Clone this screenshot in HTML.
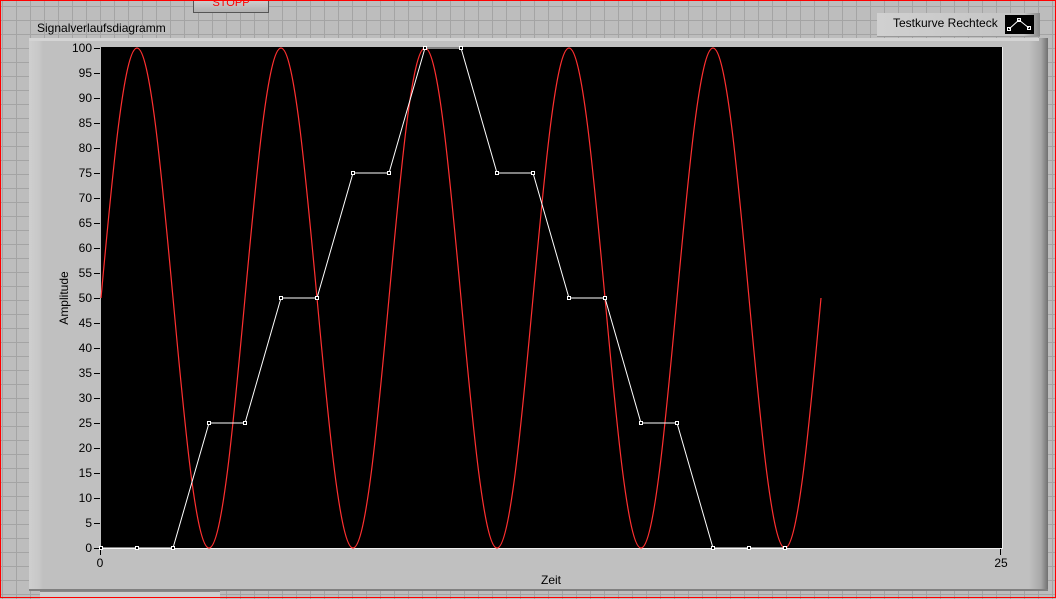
<!DOCTYPE html>
<html><head><meta charset="utf-8"><style>
html,body{margin:0;padding:0}
body{width:1056px;height:598px;overflow:hidden;position:relative;font-family:"Liberation Sans",sans-serif;
background-color:#bdbdbd;
background-image:linear-gradient(#a4a4a4 1px,transparent 1px),linear-gradient(90deg,#a4a4a4 1px,transparent 1px);
background-size:14px 14px;background-position:2px 6px}
.frame{position:absolute;left:0;top:0;width:1054px;height:596px;border:1px solid #ff0000;pointer-events:none}
.t{position:absolute;font-size:12px;color:#000;white-space:nowrap}
</style></head><body>
<div style="position:absolute;left:193px;top:-4px;width:74px;height:15px;background:linear-gradient(#d8d8d8,#b0b0b0);border:1px solid #555;color:#f00;font-size:11px;text-align:center;line-height:12px">STOPP</div>
<div class="t" style="left:37px;top:21px">Signalverlaufsdiagramm</div>
<!-- legend -->
<div style="position:absolute;left:877px;top:13px;width:163px;height:23px;background:linear-gradient(90deg,#d0d0d0,#c4c4c4 90%,#888);border-bottom:1px solid #999"></div>
<div class="t" style="left:893px;top:16px">Testkurve Rechteck</div>
<svg style="position:absolute;left:1005px;top:15px" width="29" height="19"><rect width="29" height="19" fill="#000"/><polyline points="4,14 14,5 24,13" fill="none" stroke="#fff"/><rect x="2.5" y="12.5" width="3" height="3" fill="none" stroke="#fff"/><rect x="12.5" y="3.5" width="3" height="3" fill="none" stroke="#fff"/><rect x="22.5" y="11.5" width="3" height="3" fill="none" stroke="#fff"/></svg>
<!-- panel -->
<div style="position:absolute;left:29px;top:38px;width:1019px;height:551px;background:linear-gradient(90deg,#cfcfcf 0,#c8c8c8 10px,#c0c0c0 14px,#c0c0c0 1000px,#a8a8a8 1012px,#707070 1019px);border-bottom:2px solid #808080"></div>
<div style="position:absolute;left:29px;top:38px;width:1010px;height:3px;background:#d4d4d4"></div>
<div style="position:absolute;left:40px;top:591px;width:180px;height:7px;background:#d0d0d0;border-top:1px solid #888"></div>
<svg style="position:absolute;left:0;top:0" width="1056" height="598">
<rect x="101" y="47" width="901" height="501" fill="#000"/>
<line x1="101" y1="548.5" x2="1002" y2="548.5" stroke="#eee"/>
<line x1="1002.5" y1="47" x2="1002.5" y2="549" stroke="#eee"/>
<g stroke="#000">
<path d="M94 48.5h6M94 73.5h6M94 98.5h6M94 123.5h6M94 148.5h6M94 173.5h6M94 198.5h6M94 223.5h6M94 248.5h6M94 273.5h6M94 298.5h6M94 323.5h6M94 348.5h6M94 373.5h6M94 398.5h6M94 423.5h6M94 448.5h6M94 473.5h6M94 498.5h6M94 523.5h6M94 548.5h6"/>
<path d="M100.5 549v6M1000.5 549v6"/>
</g>
<g font-size="12" text-anchor="end" fill="#000" font-family="Liberation Sans">
<text x="92" y="52">100</text><text x="92" y="77">95</text><text x="92" y="102">90</text><text x="92" y="127">85</text><text x="92" y="152">80</text><text x="92" y="177">75</text><text x="92" y="202">70</text><text x="92" y="227">65</text><text x="92" y="252">60</text><text x="92" y="277">55</text><text x="92" y="302">50</text><text x="92" y="327">45</text><text x="92" y="352">40</text><text x="92" y="377">35</text><text x="92" y="402">30</text><text x="92" y="427">25</text><text x="92" y="452">20</text><text x="92" y="477">15</text><text x="92" y="502">10</text><text x="92" y="527">5</text><text x="92" y="552">0</text>
</g>
<g font-size="12" fill="#000" font-family="Liberation Sans" text-anchor="middle">
<text x="100" y="567">0</text><text x="1001" y="567">25</text><text x="551" y="584">Zeit</text>
<text transform="translate(68,298) rotate(-90)">Amplitude</text>
</g>
<path fill="none" stroke="#ff3030" stroke-width="1.2" d="M101 298
c 11.75,-128.2 23.04,-250 36,-250 c 12.96,0 24.25,121.8 36,250 c 11.75,128.2 23.04,250 36,250 c 12.96,0 24.25,-121.8 36,-250
c 11.75,-128.2 23.04,-250 36,-250 c 12.96,0 24.25,121.8 36,250 c 11.75,128.2 23.04,250 36,250 c 12.96,0 24.25,-121.8 36,-250
c 11.75,-128.2 23.04,-250 36,-250 c 12.96,0 24.25,121.8 36,250 c 11.75,128.2 23.04,250 36,250 c 12.96,0 24.25,-121.8 36,-250
c 11.75,-128.2 23.04,-250 36,-250 c 12.96,0 24.25,121.8 36,250 c 11.75,128.2 23.04,250 36,250 c 12.96,0 24.25,-121.8 36,-250
c 11.75,-128.2 23.04,-250 36,-250 c 12.96,0 24.25,121.8 36,250 c 11.75,128.2 23.04,250 36,250 c 12.96,0 24.25,-121.8 36,-250"/>
<polyline fill="none" stroke="#fff" points="101,548 137,548 173,548 209,423 245,423 281,298 317,298 353,173 389,173 425,48 461,48 497,173 533,173 569,298 605,298 641,423 677,423 713,548 749,548 785,548"/>
<g fill="#000" stroke="#fff">
<rect x="99.5" y="546.5" width="3" height="3"/><rect x="135.5" y="546.5" width="3" height="3"/><rect x="171.5" y="546.5" width="3" height="3"/><rect x="207.5" y="421.5" width="3" height="3"/><rect x="243.5" y="421.5" width="3" height="3"/><rect x="279.5" y="296.5" width="3" height="3"/><rect x="315.5" y="296.5" width="3" height="3"/><rect x="351.5" y="171.5" width="3" height="3"/><rect x="387.5" y="171.5" width="3" height="3"/><rect x="423.5" y="46.5" width="3" height="3"/><rect x="459.5" y="46.5" width="3" height="3"/><rect x="495.5" y="171.5" width="3" height="3"/><rect x="531.5" y="171.5" width="3" height="3"/><rect x="567.5" y="296.5" width="3" height="3"/><rect x="603.5" y="296.5" width="3" height="3"/><rect x="639.5" y="421.5" width="3" height="3"/><rect x="675.5" y="421.5" width="3" height="3"/><rect x="711.5" y="546.5" width="3" height="3"/><rect x="747.5" y="546.5" width="3" height="3"/><rect x="783.5" y="546.5" width="3" height="3"/>
</g>
</svg>
<div class="frame"></div>
</body></html>
